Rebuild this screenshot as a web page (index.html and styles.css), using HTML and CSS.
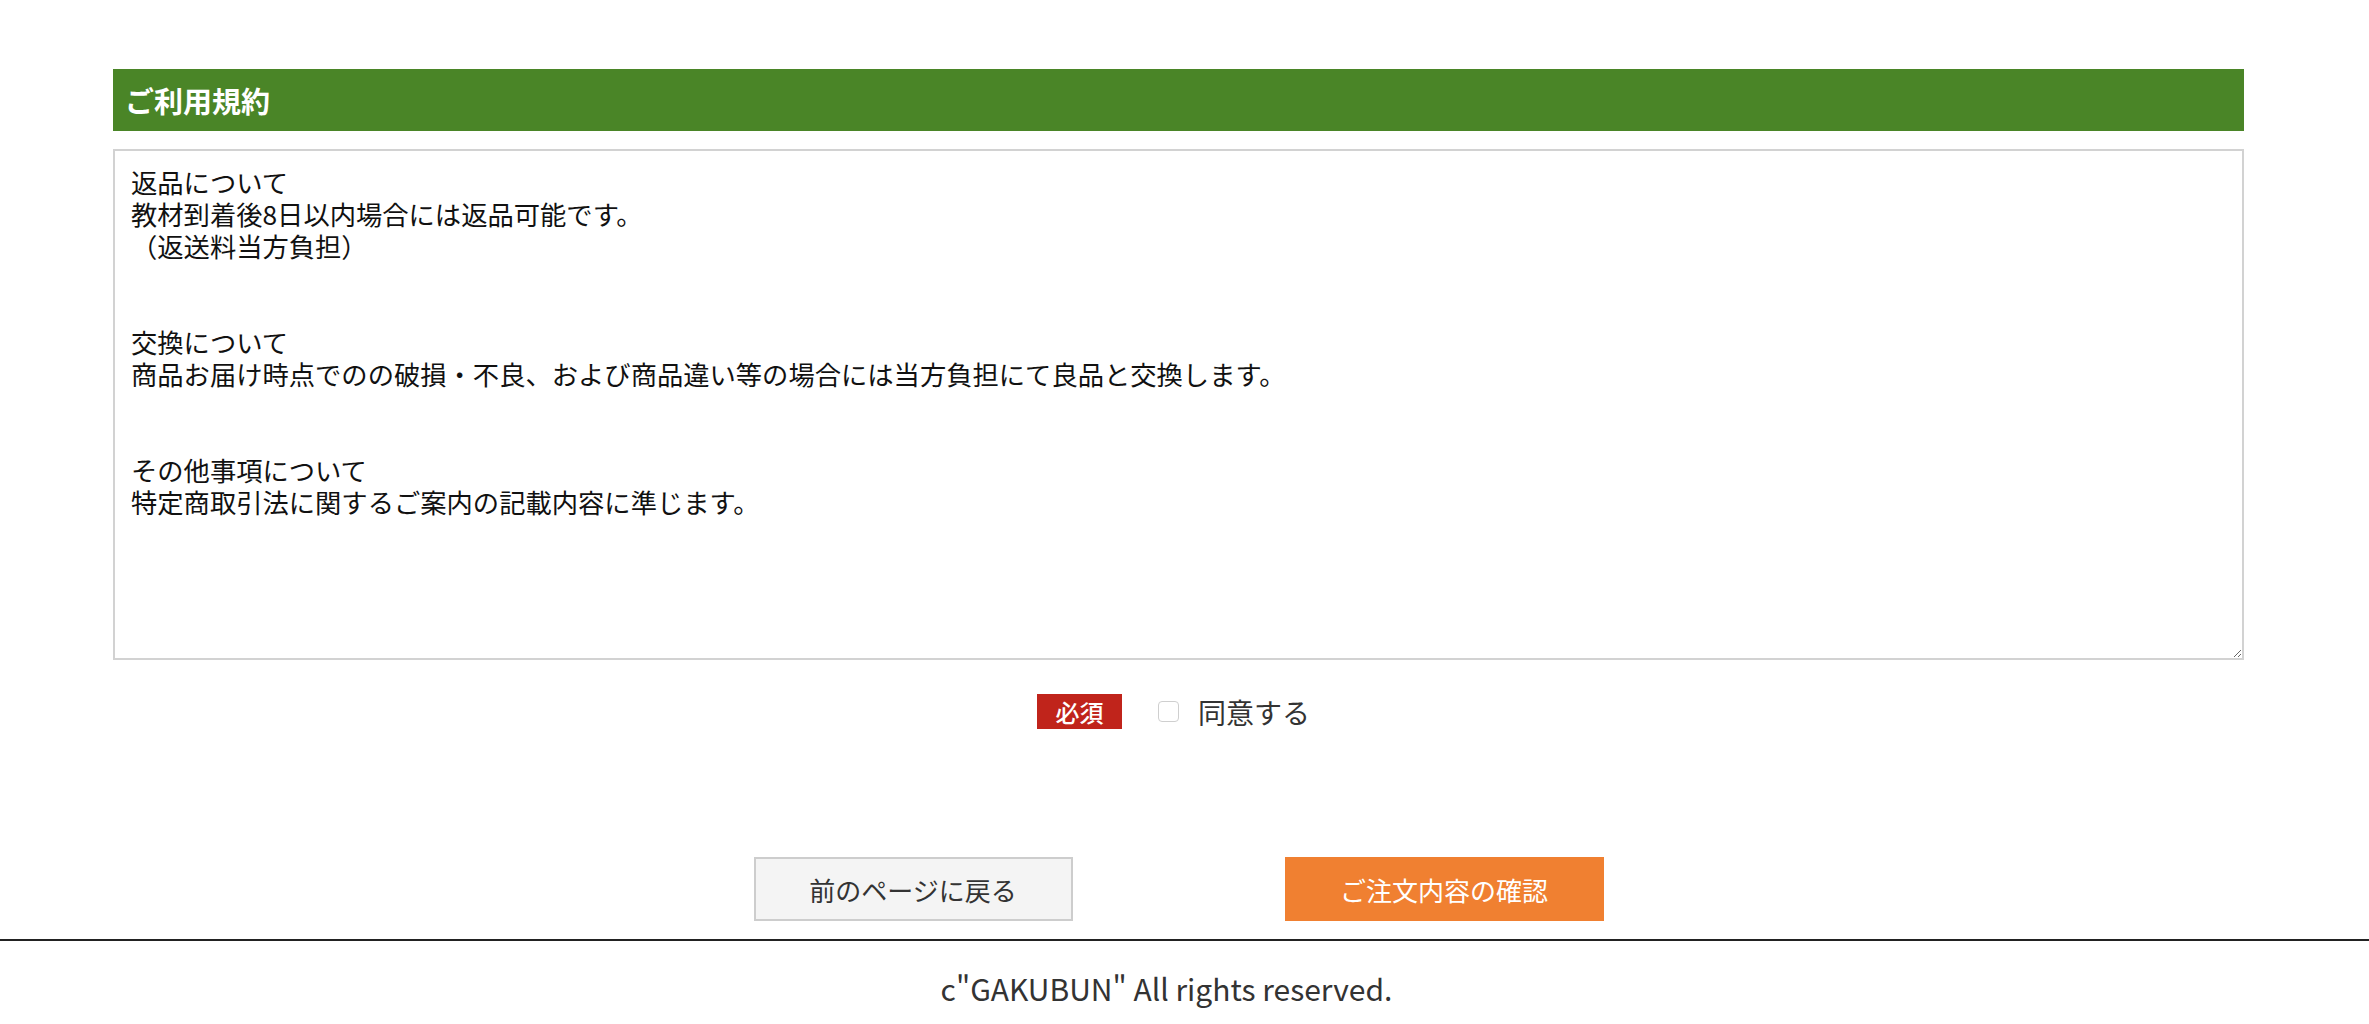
FILE: index.html
```html
<!DOCTYPE html>
<html lang="ja">
<head>
<meta charset="utf-8">
<title>ご利用規約</title>
<link rel="stylesheet" href="styles.css">
</head>
<body>
<main class="page">
  <section class="terms">
    <h2 class="terms-title">ご利用規約</h2>
    <textarea class="terms-text" readonly>返品について
教材到着後8日以内場合には返品可能です。
（返送料当方負担）


交換について
商品お届け時点でのの破損・不良、および商品違い等の場合には当方負担にて良品と交換します。


その他事項について
特定商取引法に関するご案内の記載内容に準じます。</textarea>
    <div class="agree">
      <span class="badge">必須</span>
      <label class="agree-label"><input class="agree-check" type="checkbox"><span class="agree-text">同意する</span></label>
    </div>
  </section>
  <div class="actions">
    <button class="btn btn-back" type="button">前のページに戻る</button>
    <button class="btn btn-confirm" type="button">ご注文内容の確認</button>
  </div>
</main>
<footer class="footer">c"GAKUBUN" All rights reserved.</footer>
</body>
</html>
```

FILE: styles.css
```css
html, body {
  margin: 0;
  padding: 0;
  background: #fff;
}

body {
  font-family: "Noto Sans CJK JP", "Noto Sans", sans-serif;
  color: #333;
}

.page {
  width: 2131px;
  margin: 0 0 0 113px;
  padding-top: 69px;
}

.terms-title {
  margin: 0;
  height: 62px;
  line-height: 62px;
  padding-left: 12px;
  background: #4a8527;
  color: #fff;
  font-size: 29px;
  font-weight: 700;
}

.terms-text {
  display: block;
  box-sizing: border-box;
  width: 100%;
  height: 511px;
  margin: 18px 0 0;
  padding: 15px 16px;
  border: 2px solid #d2d2d2;
  font-family: "Noto Sans CJK JP", sans-serif;
  font-size: 26.3px;
  line-height: 32px;
  color: #111;
  background: #fff;
  outline: none;
}

.agree {
  display: flex;
  justify-content: center;
  align-items: center;
  margin-top: 34px;
  height: 35px;
  padding-right: 10px;
}

.badge {
  display: inline-block;
  width: 85px;
  height: 35px;
  line-height: 35px;
  text-align: center;
  background: #c0241b;
  color: #fff;
  font-size: 24px;
  font-weight: 500;
}

.agree-label {
  display: flex;
  align-items: center;
  margin-left: 36px;
}

.agree-check {
  appearance: none;
  -webkit-appearance: none;
  width: 21px;
  height: 21px;
  margin: 0;
  border: 1px solid #cfcfcf;
  border-radius: 4px;
  background: #fff;
}

.agree-text {
  margin-left: 19px;
  font-size: 28px;
  color: #333;
}

.actions {
  display: flex;
  justify-content: center;
  gap: 212px;
  margin-top: 128px;
}

.btn {
  box-sizing: border-box;
  width: 319px;
  height: 64px;
  font-family: "Noto Sans CJK JP", sans-serif;
  font-size: 26px;
  padding: 0;
  cursor: pointer;
}

.btn-back {
  background: #f4f4f4;
  border: 2px solid #cdcdcd;
  color: #333;
}

.btn-confirm {
  background: #f08031;
  border: none;
  color: #fff;
}

.footer {
  margin-top: 18px;
  border-top: 2px solid #222;
  padding-top: 26px;
  padding-right: 36px;
  text-align: center;
  font-size: 30px;
  line-height: 42px;
  color: #333;
}
```
